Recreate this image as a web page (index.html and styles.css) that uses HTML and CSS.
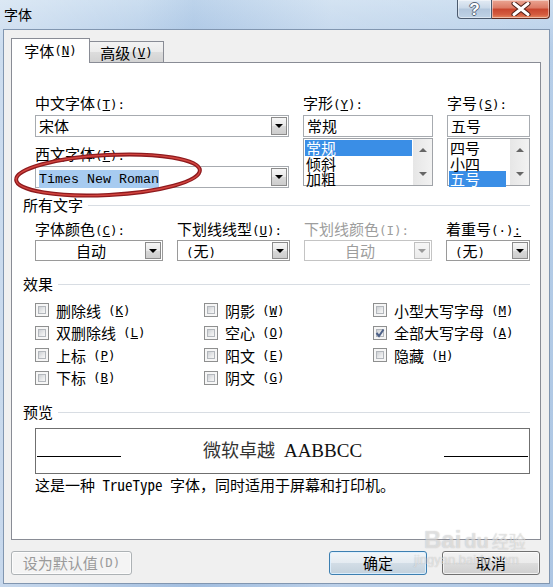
FILE: index.html
```html
<!DOCTYPE html>
<html lang="zh-CN">
<head>
<meta charset="utf-8">
<title>字体</title>
<link rel="stylesheet" href="styles.css">
</head>
<body>
<div class="window">
  <div class="titlebar">
    <span class="title">字体</span>
    <div class="capbtns">
      <div class="capbtn help"><span class="q">?</span></div>
      <div class="capbtn close">
        <svg width="22" height="14" viewBox="0 0 22 14">
          <path d="M4 1.5 L18 12.5 M18 1.5 L4 12.5" stroke="#4a1d15" stroke-width="5" stroke-linecap="round" fill="none"/>
          <path d="M4 1.5 L18 12.5 M18 1.5 L4 12.5" stroke="#ffffff" stroke-width="3" stroke-linecap="round" fill="none"/>
        </svg>
      </div>
    </div>
  </div>

  <div class="client">
    <div class="tabs">
      <div class="tab active">字体<span class="m">(<u>N</u>)</span></div>
      <div class="tab">高级<span class="m">(<u>V</u>)</span></div>
    </div>

    <div class="panel">
      <div class="fontrow">
        <div class="col">
          <div class="lbl">中文字体<span class="m">(<u>T</u>):</span></div>
          <div class="combo edit"><span class="val">宋体</span><span class="dd"></span></div>
          <div class="lbl lbl2">西文字体<span class="m">(<u>F</u>):</span></div>
          <div class="combo edit"><span class="val"><span class="sel">Times New Roman</span></span><span class="dd"></span></div>
        </div>
        <div class="col">
          <div class="lbl">字形<span class="m">(<u>Y</u>):</span></div>
          <div class="input">常规</div>
          <div class="list">
            <div class="items">
              <div class="item on">常规</div>
              <div class="item">倾斜</div>
              <div class="item">加粗</div>
            </div>
            <div class="sb"><span class="up"></span><span class="down"></span></div>
          </div>
        </div>
        <div class="col">
          <div class="lbl">字号<span class="m">(<u>S</u>):</span></div>
          <div class="input">五号</div>
          <div class="list">
            <div class="items">
              <div class="item">四号</div>
              <div class="item">小四</div>
              <div class="item on short">五号</div>
            </div>
            <div class="sb"><span class="up"></span><span class="down"></span></div>
          </div>
        </div>
      </div>

      <div class="group g1"><span>所有文字</span></div>
      <div class="allrow">
        <div class="col">
          <div class="lbl">字体颜色<span class="m">(<u>C</u>):</span></div>
          <div class="combo drop"><span class="val center">自动</span><span class="dd"></span></div>
        </div>
        <div class="col">
          <div class="lbl">下划线线型<span class="m">(<u>U</u>):</span></div>
          <div class="combo drop"><span class="val left"><span class="m">(</span>无<span class="m">)</span></span><span class="dd"></span></div>
        </div>
        <div class="col disabled">
          <div class="lbl">下划线颜色<span class="m">(I):</span></div>
          <div class="combo drop"><span class="val center">自动</span><span class="dd"></span></div>
        </div>
        <div class="col">
          <div class="lbl">着重号<span class="m">(·)<u>:</u></span></div>
          <div class="combo drop"><span class="val left"><span class="m">(</span>无<span class="m">)</span></span><span class="dd"></span></div>
        </div>
      </div>

      <div class="group g2"><span>效果</span></div>
      <div class="effects">
        <label class="chk"><span class="box"></span>删除线<span class="m">(<u>K</u>)</span></label>
        <label class="chk"><span class="box"></span>阴影<span class="m">(<u>W</u>)</span></label>
        <label class="chk"><span class="box"></span>小型大写字母<span class="m">(<u>M</u>)</span></label>
        <label class="chk"><span class="box"></span>双删除线<span class="m">(<u>L</u>)</span></label>
        <label class="chk"><span class="box"></span>空心<span class="m">(<u>O</u>)</span></label>
        <label class="chk"><span class="box checked"><svg width="10" height="10" viewBox="0 0 10 10"><path d="M1.5 5 L4 8 L8.5 1.5" stroke="#4d6188" stroke-width="2" fill="none"/></svg></span>全部大写字母<span class="m">(<u>A</u>)</span></label>
        <label class="chk"><span class="box"></span>上标<span class="m">(<u>P</u>)</span></label>
        <label class="chk"><span class="box"></span>阳文<span class="m">(<u>E</u>)</span></label>
        <label class="chk"><span class="box"></span>隐藏<span class="m">(<u>H</u>)</span></label>
        <label class="chk"><span class="box"></span>下标<span class="m">(<u>B</u>)</span></label>
        <label class="chk"><span class="box"></span>阴文<span class="m">(<u>G</u>)</span></label>
      </div>

      <div class="group g3"><span>预览</span></div>
      <div class="preview">
        <span class="pline"></span>
        <span class="ptext"><span class="pcn">微软卓越</span><span class="pen">AABBCC</span></span>
        <span class="pline"></span>
      </div>
      <div class="caption">这是一种 TrueType 字体，同时适用于屏幕和打印机。</div>
    </div>

    <div class="buttons">
      <div class="btn disabled wide">设为默认值<span class="m">(D)</span></div>
      <div class="btn default">确定</div>
      <div class="btn">取消</div>
    </div>
  </div>

  <svg class="ellipse" width="210" height="62" viewBox="0 0 210 62">
    <ellipse cx="100" cy="31" rx="92" ry="20" transform="rotate(-3 100 31)" fill="none" stroke="#8e1a1e" stroke-width="4"/>
    <ellipse cx="100" cy="31" rx="92" ry="20" transform="rotate(-3 100 31)" fill="none" stroke="#d2453f" stroke-width="1.4"/>
  </svg>

  <div class="watermark">
    <span class="wm-bai">Bai</span><span class="wm-du">du</span><span class="wm-jy">经验</span>
    <div class="wm-url">jingyan.baidu.com</div>
  </div>
</div>
</body>
</html>
```
FILE: styles.css
```css
html, body {
  margin: 0;
  padding: 0;
}

body {
  width: 553px;
  height: 587px;
  overflow: hidden;
  font-family: "Noto Sans Mono CJK SC", "Noto Sans CJK SC", monospace;
  font-size: 15px;
  color: #000;
  background:
    linear-gradient(90deg, rgba(255,255,255,0.35) 0%, rgba(255,255,255,0.05) 25%, rgba(120,160,210,0.15) 35%, rgba(255,255,255,0.2) 60%, rgba(255,255,255,0.05) 100%),
    linear-gradient(180deg, #c9dcef 0%, #b2cbe7 8%, #a9c3e2 100%);
}

/* half-width latin parts (mnemonics, parentheses) */
.m {
  font-family: "DejaVu Sans Mono", monospace;
  font-size: 12.5px;
}

.window {
  width: 553px;
  height: 587px;
  position: relative;
  display: flex;
  flex-direction: column;
}

/* title bar */
.titlebar {
  height: 29px;
  display: flex;
  justify-content: space-between;
  align-items: flex-start;
  padding: 0 3px 0 4px;
  box-sizing: border-box;
}

.title {
  font-family: "Noto Sans CJK SC", sans-serif;
  font-size: 14px;
  line-height: 29px;
  color: #000;
}

.capbtns {
  display: flex;
}

.capbtn {
  height: 19px;
  box-sizing: border-box;
  border: 1px solid #4b5a6e;
  border-top: none;
  display: flex;
  align-items: center;
  justify-content: center;
  box-shadow: inset 0 0 0 1px rgba(255,255,255,0.45);
}

.help {
  width: 35px;
  border-radius: 0 0 0 4px;
  background: linear-gradient(180deg, #e3ebf4 0%, #c9d8e8 45%, #b2c6dc 50%, #bfd2e6 100%);
}

.help .q {
  font-family: "Liberation Sans", sans-serif;
  font-weight: bold;
  font-size: 17px;
  line-height: 17px;
  color: #fff;
  text-shadow: -1px 0 #55657a, 1px 0 #55657a, 0 -1px #55657a, 0 1px #55657a;
}

.close {
  width: 58px;
  border-left: none;
  border-color: #5d2a20;
  border-radius: 0 0 4px 0;
  background: linear-gradient(180deg, #eba694 0%, #dc7a64 45%, #c8452e 50%, #d45b3f 80%, #e48a62 100%);
}

/* client area */
.client {
  margin: 0 3px;
  height: 555px;
  box-sizing: border-box;
  border: 1px solid #8196b0;
  background: #f0f0f0;
  display: flex;
  flex-direction: column;
}

.tabs {
  display: flex;
  align-items: flex-end;
  height: 32px;
  padding-left: 7px;
}

.tab {
  box-sizing: border-box;
  height: 21px;
  width: 74px;
  border: 1px solid #898c95;
  border-bottom: none;
  border-left: none;
  background: linear-gradient(180deg, #f3f3f3 0%, #ebebeb 50%, #dddddd 50%, #d2d2d2 100%);
  display: flex;
  align-items: center;
  justify-content: center;
  line-height: 20px;
  padding-top: 1px;
}

.tab.active {
  width: 79px;
  height: 25px;
  border-left: 1px solid #898c95;
  background: #fff;
  margin-bottom: -1px;
  position: relative;
  z-index: 1;
  padding-top: 0;
  padding-bottom: 1px;
}

.panel {
  margin-left: 7px;
  width: 530px;
  height: 478px;
  box-sizing: border-box;
  border: 1px solid #898c95;
  background: #fff;
  padding: 30px 10px 0 11px;
}

.lbl {
  height: 20px;
  line-height: 20px;
  white-space: nowrap;
}

.lbl2 {
  height: 27px;
  padding-top: 7px;
  box-sizing: border-box;
}

.fontrow {
  display: grid;
  grid-template-columns: 254px 130px 83px;
  column-gap: 14px;
  margin-left: 12px;
}

.col {
  display: flex;
  flex-direction: column;
}

/* combo boxes */
.combo {
  box-sizing: border-box;
  border: 1px solid #a7abb0;
  background: #fff;
  display: flex;
  align-items: stretch;
  padding: 1px;
}

.combo.edit {
  height: 22px;
  margin-top: 2px;
}

.combo.drop {
  height: 21px;
  margin-top: 1px;
  border-color: #9a9a9a;
}

.val {
  flex: 1;
  line-height: 18px;
  padding-left: 2px;
  white-space: nowrap;
}

.val.center {
  text-align: center;
  padding-left: 0;
}

.val.left {
  padding-left: 7px;
}

.sel {
  font-family: "Liberation Mono", monospace;
  font-size: 13.33px;
  background: #a7cbf0;
  padding: 2px 0 1px;
}

.dd {
  width: 16px;
  box-sizing: border-box;
  border: 1px solid #8b8b8b;
  background: linear-gradient(180deg, #f6f6f6 0%, #e9e9e9 50%, #d9d9d9 51%, #cdcdcd 100%);
  display: flex;
  align-items: center;
  justify-content: center;
}

.dd::after {
  content: "";
  border-top: 4px solid #000;
  border-left: 4px solid transparent;
  border-right: 4px solid transparent;
}

.disabled .lbl,
.disabled .val {
  color: #9d9d9d;
}

.disabled .combo {
  border-color: #c4c4c4;
}

.disabled .dd {
  border-color: #c0c0c0;
  background: linear-gradient(180deg, #f6f6f6, #ebebeb);
}

.disabled .dd::after {
  border-top-color: #9a9a9a;
}

/* inputs & lists */
.input {
  margin-top: 2px;
  height: 22px;
  box-sizing: border-box;
  border: 1px solid #a7abb0;
  background: #fff;
  line-height: 20px;
  padding-left: 3px;
}

.list {
  margin-top: 1px;
  height: 48px;
  box-sizing: border-box;
  border: 1px solid #a0a3a8;
  background: #fff;
  display: flex;
}

.items {
  flex: 1;
  padding: 1px 1px 0 1px;
}

.item {
  height: 15.5px;
  line-height: 15.5px;
  padding-left: 1px;
}

.item.on {
  background: #3a8ee6;
  color: #fff;
}

.item.on.short {
  margin-right: 3px;
}

.sb {
  width: 19px;
  background: linear-gradient(90deg, #e6e6e6, #f2f2f2);
  display: flex;
  flex-direction: column;
  justify-content: space-between;
  align-items: center;
  padding: 9px 0 9px;
  box-sizing: border-box;
}

.sb .up {
  border-bottom: 4px solid #666;
  border-left: 4px solid transparent;
  border-right: 4px solid transparent;
}

.sb .down {
  border-top: 4px solid #666;
  border-left: 4px solid transparent;
  border-right: 4px solid transparent;
}

/* groups */
.group {
  display: flex;
  align-items: center;
  height: 20px;
  line-height: 20px;
}

.group::after {
  content: "";
  flex: 1;
  height: 1px;
  background: #d8dde3;
  margin-left: 5px;
}

.g1 { margin-top: 7px; }
.g2 { margin-top: 13px; }
.g3 { margin-top: 13px; }

.allrow {
  display: grid;
  grid-template-columns: 128px 113px 128px 84px;
  column-gap: 14px;
  margin-left: 12px;
  margin-top: 4px;
}

/* effects */
.effects {
  display: grid;
  grid-template-columns: 169px 169px 1fr;
  grid-auto-rows: 22.5px;
  margin-left: 12px;
  margin-top: 5px;
}

.chk {
  display: flex;
  align-items: center;
  gap: 7px;
  white-space: nowrap;
}

.box {
  width: 14px;
  height: 14px;
  box-sizing: border-box;
  border: 1px solid #8e8f8f;
  background: #f6f6f6;
  position: relative;
  display: flex;
  align-items: center;
  justify-content: center;
}

.box::before {
  content: "";
  position: absolute;
  inset: 2px;
  border: 1px solid #b3b7bc;
  background: linear-gradient(135deg, #cdd0d4 0%, #e9eaeb 60%, #f7f7f7 100%);
}

.box svg {
  position: relative;
  z-index: 1;
}

/* preview */
.preview {
  margin-left: 12px;
  margin-top: 6px;
  height: 46px;
  box-sizing: border-box;
  border: 1px solid #6f6f6f;
  display: flex;
  align-items: flex-end;
  justify-content: space-between;
  padding: 0 1px 12px 1px;
}

.pline {
  width: 84px;
  height: 1px;
  background: #000;
  margin-bottom: 4px;
}

.ptext {
  line-height: 20px;
  white-space: nowrap;
}

.pcn {
  font-size: 18px;
  color: #333;
}

.pen {
  font-family: "Liberation Serif", serif;
  font-size: 19px;
  color: #111;
  margin-left: 9px;
}

.caption {
  margin-left: 12px;
  margin-top: 1px;
  line-height: 20px;
  white-space: nowrap;
}

/* buttons */
.buttons {
  display: flex;
  margin-top: 11px;
  padding: 0 9px 0 7px;
  gap: 15px;
}

.btn {
  height: 24px;
  width: 98px;
  box-sizing: border-box;
  border: 1px solid #707070;
  border-radius: 3px;
  background: linear-gradient(180deg, #f2f2f2 0%, #ebebeb 50%, #dddddd 51%, #cfcfcf 100%);
  box-shadow: inset 0 0 0 1px rgba(255,255,255,0.7);
  display: flex;
  align-items: center;
  justify-content: center;
  line-height: 20px;
}

.btn.wide {
  width: 121px;
  margin-right: auto;
}

.btn.disabled {
  border-color: #adb2b5;
  background: #f4f4f4;
  color: #9a9a9a;
}

.btn.default {
  border-color: #3c7fb1;
  background: linear-gradient(180deg, #f1f5f8 0%, #e4ebf1 50%, #d2dde6 51%, #c3d1dc 100%);
  box-shadow: inset 0 0 0 1px rgba(220,240,255,0.9);
}

/* overlays */
.ellipse {
  position: absolute;
  left: 8px;
  top: 144px;
}

.watermark {
  position: absolute;
  left: 412px;
  top: 526px;
  width: 120px;
  pointer-events: none;
  font-family: "Liberation Sans", sans-serif;
  color: rgba(255,255,255,0.5);
  text-shadow: 0 0 1px rgba(110,110,110,0.45);
}

.wm-bai {
  font-size: 24px;
  font-weight: bold;
  margin-left: 12px;
}

.wm-du {
  font-size: 20px;
  font-weight: bold;
  margin-left: 3px;
}

.wm-jy {
  font-family: "Noto Sans CJK SC", sans-serif;
  font-size: 17px;
  margin-left: 3px;
}

.wm-url {
  font-size: 13px;
  margin-top: -2px;
  margin-left: 2px;
}
```
